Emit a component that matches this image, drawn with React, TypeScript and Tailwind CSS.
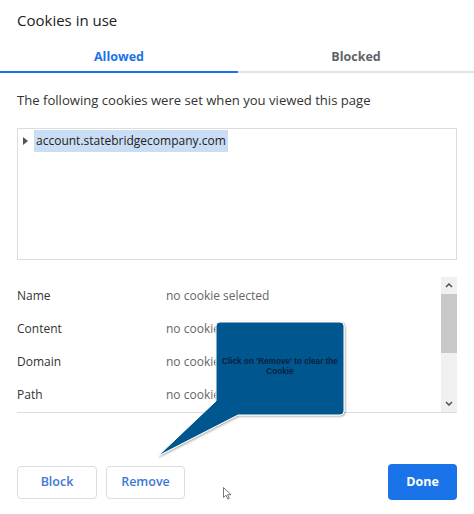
import React from 'react'

const font = { fontFamily: '"Open Sans", "Noto Sans", sans-serif' }

const details = [
  { label: 'Name', value: 'no cookie selected' },
  { label: 'Content', value: 'no cookie selected' },
  { label: 'Domain', value: 'no cookie selected' },
  { label: 'Path', value: 'no cookie selected' },
]

function Callout() {
  return (
    <div className="absolute left-0 top-0 w-[474px] h-[514px] pointer-events-none">
      <svg width="474" height="514" className="absolute left-0 top-0">
        <defs>
          <filter id="sh" x="-20%" y="-20%" width="140%" height="140%">
            <feDropShadow dx="1" dy="1" stdDeviation="1.2" floodColor="#000" floodOpacity="0.35" />
          </filter>
        </defs>
        <path
          d="M220 322 H340 Q344 322 344 326 V411 Q344 415 340 415 H238 L158 456 L216 401 V326 Q216 322 220 322 Z"
          fill="#03568f"
          stroke="#ffffff"
          strokeWidth="1"
          filter="url(#sh)"
        />
      </svg>
      <div
        className="absolute left-[214px] top-[357px] w-[132px] text-center text-[8.2px] font-bold leading-[10px] text-[#0b1f3f]"
        style={{ fontFamily: '"Liberation Sans", Arial, sans-serif' }}
      >
        Click on 'Remove' to clear the
        <br />
        Cookie
      </div>
    </div>
  )
}

export default function App() {
  return (
    <div className="relative w-[474px] h-[514px] bg-white text-[#333] overflow-hidden" style={font}>
      {/* Title */}
      <div className="px-[17px] pt-[9px] h-[40px] text-[15px] text-[#202124]">Cookies in use</div>

      {/* Tabs */}
      <div className="flex h-[33px] border-b-2 border-[#e3e3e3]">
        <div className="w-[238px] -mb-[2px] pt-[3px] border-b-2 border-[#1a73e8] flex items-center justify-center text-[12.5px] font-bold text-[#1a73e8]">
          Allowed
        </div>
        <div className="flex-1 pt-[3px] flex items-center justify-center text-[12.5px] font-bold text-[#5f6368]">
          Blocked
        </div>
      </div>

      {/* Description */}
      <div className="px-[17px] pt-[18px] h-[55px] text-[13.1px] text-[#333]">
        The following cookies were set when you viewed this page
      </div>

      {/* Tree */}
      <div className="mx-[17px] h-[132px] w-[440px] border border-[#dcdcdc] pt-[1px]">
        <div className="flex items-center h-[22px]">
          <span className="ml-[5px] mr-[6px] w-0 h-0 border-y-[4px] border-y-transparent border-l-[5px] border-l-[#555]" />
          <span className="bg-[#c9ddf4] h-[22px] px-[2px] flex items-center text-[12px] text-[#222]">
            account.statebridgecompany.com
          </span>
        </div>
      </div>

      {/* Details */}
      <div className="mx-[17px] mt-[17px] w-[440px] h-[136px] flex border-b border-[#dcdcdc]">
        <div className="flex-1 flex flex-col pt-[2px]">
          {details.map((d) => (
            <div key={d.label} className="flex items-center h-[33.6px] text-[12px]">
              <div className="w-[149px] text-[#333]">{d.label}</div>
              <div className="text-[#666]">{d.value}</div>
            </div>
          ))}
        </div>
        <div className="w-[16px] bg-[#f0f0f0] flex flex-col">
          <div className="h-[17px] flex items-center justify-center">
            <svg width="8" height="5" viewBox="0 0 8 5">
              <path d="M1 4 L4 1 L7 4" fill="none" stroke="#505050" strokeWidth="1.5" />
            </svg>
          </div>
          <div className="h-[59px] bg-[#c8c8c8]" />
          <div className="flex-1" />
          <div className="h-[17px] flex items-center justify-center">
            <svg width="8" height="5" viewBox="0 0 8 5">
              <path d="M1 1 L4 4 L7 1" fill="none" stroke="#505050" strokeWidth="1.5" />
            </svg>
          </div>
        </div>
      </div>

      {/* Buttons */}
      <div className="flex items-center px-[17px] mt-[51px]">
        <button className="w-[80px] h-[33px] rounded-[4px] border border-[#dadce0] text-[12.5px] font-semibold text-[#3c78d8]">
          Block
        </button>
        <button className="ml-[9px] w-[79px] h-[33px] rounded-[4px] border border-[#dadce0] text-[12.5px] font-semibold text-[#3c78d8]">
          Remove
        </button>
        <div className="ml-[38px] mt-[22px]">
          <svg width="9" height="13" viewBox="0 0 9 13">
            <path d="M0.5 0.5 V10.5 L3 8.2 L4.8 12 L6.3 11.3 L4.6 7.7 H8 Z" fill="#fff" stroke="#777" strokeWidth="1" />
          </svg>
        </div>
        <div className="flex-1" />
        <button className="w-[69px] h-[36px] rounded-[4px] bg-[#1a73e8] text-[12.5px] font-bold text-white">
          Done
        </button>
      </div>

      <Callout />
    </div>
  )
}
